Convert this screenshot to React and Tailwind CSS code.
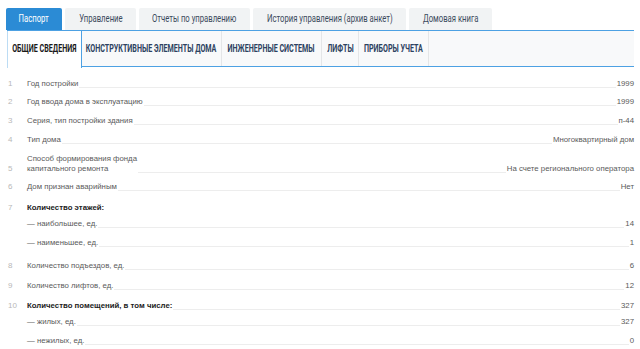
import React from "react";

const tabs = [
  { title: "Паспорт", w: "w-[56px]", active: true },
  { title: "Управление", w: "w-[71px]" },
  { title: "Отчеты по управлению", w: "w-[111px]" },
  { title: "История управления (архив анкет)", w: "w-[153px]" },
  { title: "Домовая книга", w: "w-[83px]" },
];

const subtabs = [
  { title: "Общие сведения", w: "w-[75px]", active: true },
  { title: "Конструктивные элементы дома", w: "w-[140px]" },
  { title: "Инженерные системы", w: "w-[100px]" },
  { title: "Лифты", w: "w-[37px]" },
  { title: "Приборы учета", w: "w-[70px]" },
];

const rows = [
  { n: "1", label: "Год постройки", value: "1999", mt: "mt-0" },
  { n: "2", label: "Год ввода дома в эксплуатацию", value: "1999", mt: "mt-[8px]" },
  { n: "3", label: "Серия, тип постройки здания", value: "п-44", mt: "mt-[9px]" },
  { n: "4", label: "Тип дома", value: "Многоквартирный дом", mt: "mt-[9px]" },
  {
    n: "5",
    label: ["Способ формирования фонда", "капитального ремонта"],
    value: "На счете регионального оператора",
    mt: "mt-[9px]",
  },
  { n: "6", label: "Дом признан аварийным", value: "Нет", mt: "mt-[8px]" },
  { n: "7", label: "Количество этажей:", bold: true, noLine: true, mt: "mt-[11px]" },
  { label: "— наибольшее, ед.", value: "14", mt: "mt-[6px]" },
  { label: "— наименьшее, ед.", value: "1", mt: "mt-[9px]" },
  { n: "8", label: "Количество подъездов, ед.", value: "6", mt: "mt-[13px]" },
  { n: "9", label: "Количество лифтов, ед.", value: "12", mt: "mt-[10px]" },
  { n: "10", label: "Количество помещений, в том числе:", value: "327", bold: true, mt: "mt-[10px]" },
  { label: "— жилых, ед.", value: "327", mt: "mt-[6px]" },
  { label: "— нежилых, ед.", value: "0", mt: "mt-[9px]" },
];

const Row = ({ item }) => (
  <div className={"flex items-end leading-[10px] " + item.mt}>
    <div className="w-[20px] shrink-0 text-[8px] text-[#b8b8b8] pl-[1px]">{item.n}</div>
    <div className={item.bold ? "font-bold text-[#222]" : "text-[#5a5a5a]"}>
      {Array.isArray(item.label)
        ? item.label.map((l) => <div key={l}>{l}</div>)
        : item.label}
    </div>
    {!item.noLine && (
      <div className="flex-1 border-b border-[#ededed] mb-[1px] mx-[1px]"></div>
    )}
    {item.value && <div className="text-[#5a5a5a]">{item.value}</div>}
  </div>
);

const App = () => {
  return (
    <div className="w-[640px] h-[349px] overflow-hidden bg-white font-['Liberation_Sans',Arial,sans-serif] text-[7.8px]">
      <div className="px-[6px] pt-[8px] flex gap-[3px]">
        {tabs.map((t) => (
          <div
            key={t.title}
            className={
              "h-[22px] flex items-center justify-center rounded-t-[2px] shrink-0 " +
              t.w +
              (t.active ? " bg-[#2b8bd5] text-white" : " bg-[#f1f3f4] text-[#3b4a5c]")
            }
          >
            <span className="inline-block whitespace-nowrap scale-x-[0.7] font-['Roboto',sans-serif] text-[11px]">
              {t.title}
            </span>
          </div>
        ))}
      </div>
      <div className="mx-[7px] w-[627px] flex border-t-[1.5px] border-b-[1.5px] border-[#4da1e3] bg-[#f8f9fa] h-[37px]">
        {subtabs.map((s) => (
          <div
            key={s.title}
            className={
              "flex items-center justify-center shrink-0 " +
              s.w +
              (s.active
                ? " bg-white border-l border-l-[#bcdcf4] border-r border-r-[#4da1e3] -mb-[1.5px] text-[#1a1a1a]"
                : " border-r border-r-[#e4e6e8] text-[#2c4260]")
            }
          >
            <span className="inline-block whitespace-nowrap scale-x-[0.68] font-['Roboto',sans-serif] font-bold uppercase text-[10.5px]">
              {s.title}
            </span>
          </div>
        ))}
      </div>
      <div className="pl-[7px] pr-[6px] pt-[12px]">
        {rows.map((r, i) => (
          <Row key={i} item={r} />
        ))}
      </div>
    </div>
  );
};

export default App;
